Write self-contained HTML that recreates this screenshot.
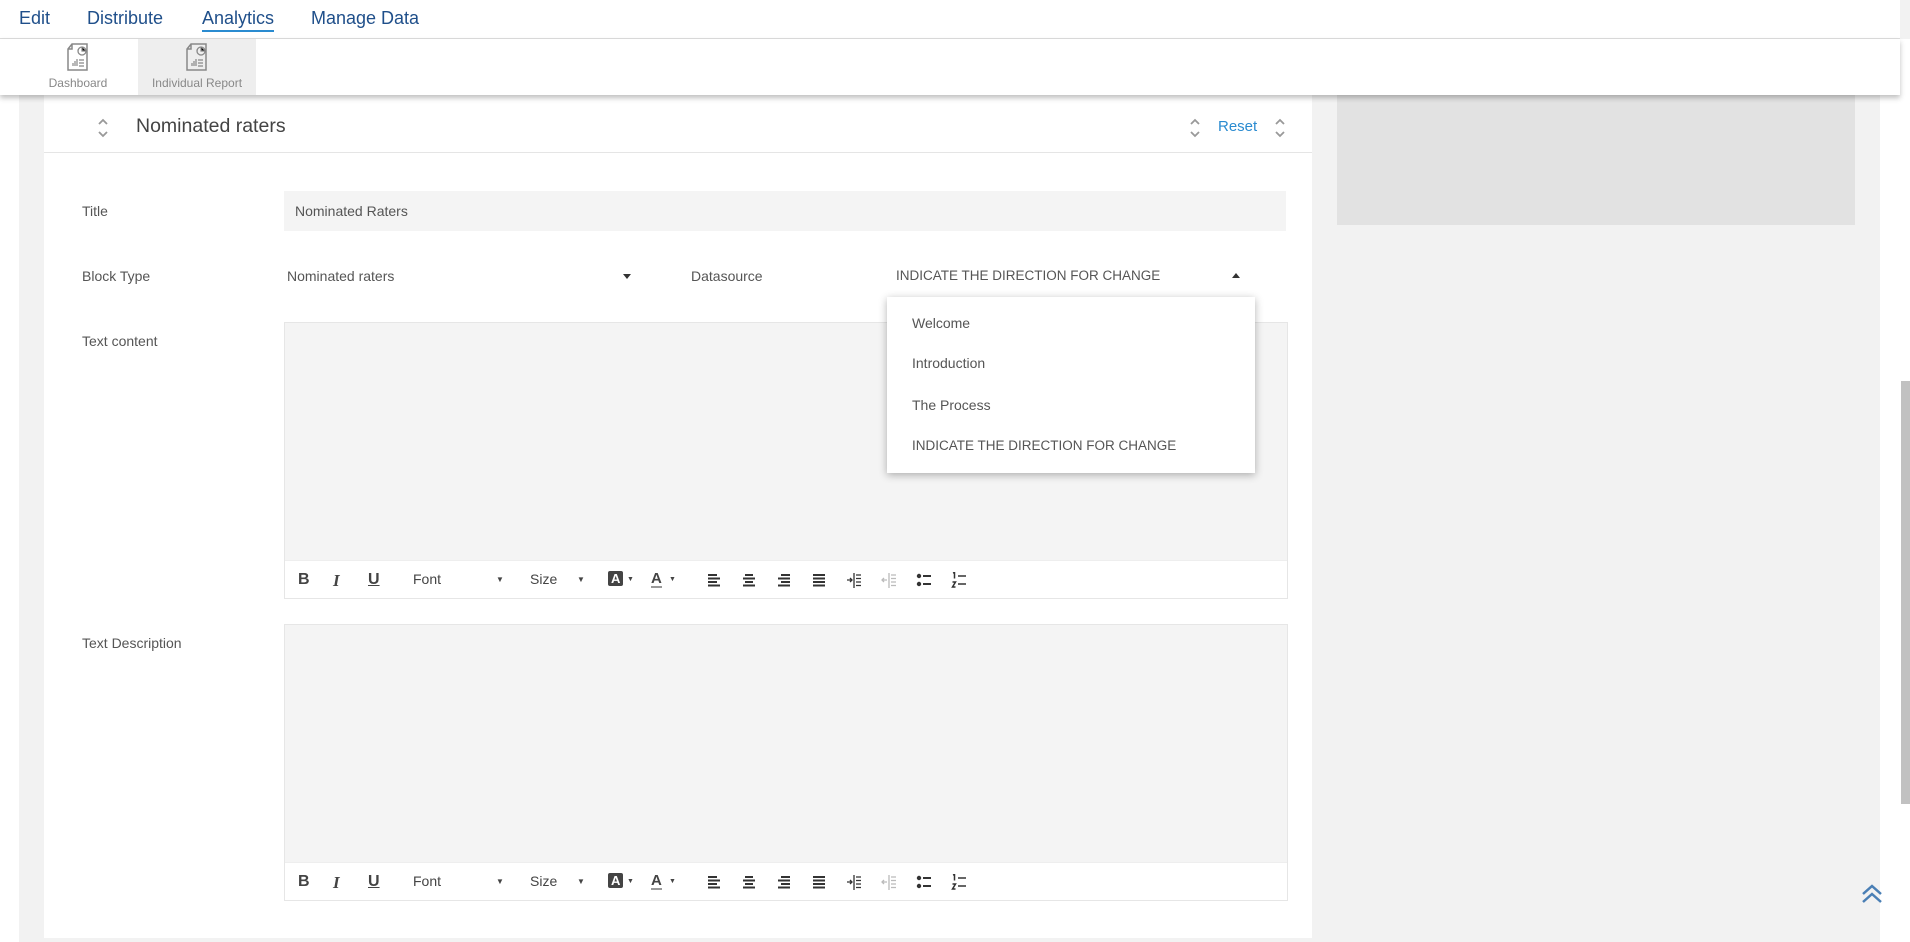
<!DOCTYPE html>
<html><head><meta charset="utf-8"><style>
*{box-sizing:border-box;margin:0;padding:0}
body{width:1910px;height:942px;overflow:hidden;background:#f2f2f2;font-family:"Liberation Sans",sans-serif;color:#555;position:relative}
.a{position:absolute}
.nav{left:0;top:0;width:1900px;height:39px;background:#fff;border-bottom:1px solid #ddd}
.nav span{position:absolute;top:8px;font-size:18px;color:#1f4f8a}
.bar{left:0;top:39px;width:1900px;height:56px;background:#fff;box-shadow:0 3px 5px rgba(0,0,0,.25);z-index:5}
.tab{position:absolute;top:0;height:56px;font-size:12px;color:#888;text-align:center}
.lbl{font-size:14px;color:#555}
.tb{position:absolute;top:0;height:38px;width:100%;background:#fff;border-top:1px solid #eee}
.tb span{position:absolute;top:10px;font-size:15px;color:#444}
.tb svg{position:absolute;top:11px}
.ed{background:#f4f4f4;border:1px solid #e6e6e6}
</style></head><body>
<div class="a nav"><span style="left:19px">Edit</span><span style="left:87px">Distribute</span><span style="left:202px;border-bottom:2px solid #2a8bd0;padding-bottom:1px">Analytics</span><span style="left:311px">Manage Data</span></div>
<div class="a bar">
 <div class="tab" style="left:37px;width:82px"><svg width="30" height="32" viewBox="0 0 30 32" style="margin-top:3px"><path d="M9 2h15v26H5V7z M9 2v5H5" fill="none" stroke="#888" stroke-width="1.5"/><circle cx="19" cy="9" r="4" fill="none" stroke="#888" stroke-width="1.3"/><path d="M19 5v4h4M10 24v-3M12 24v-5M14 24v-7M16 18h5M16 21h5M16 24h5" stroke="#888" stroke-width="1.2"/></svg><div style="margin-top:-1px">Dashboard</div></div>
 <div class="tab" style="left:138px;width:118px;background:#eee"><svg width="30" height="32" viewBox="0 0 30 32" style="margin-top:3px"><path d="M9 2h15v26H5V7z M9 2v5H5" fill="none" stroke="#888" stroke-width="1.5"/><circle cx="19" cy="9" r="4" fill="none" stroke="#888" stroke-width="1.3"/><path d="M19 5v4h4M10 24v-3M12 24v-5M14 24v-7M16 18h5M16 21h5M16 24h5" stroke="#888" stroke-width="1.2"/></svg><div style="margin-top:-1px">Individual Report</div></div>
</div>
<div class="a" style="left:0;top:95px;width:19px;height:847px;background:#fff"></div>
<div class="a" style="left:44px;top:95px;width:1268px;height:843px;background:#fff"></div>
<div class="a" style="left:1337px;top:95px;width:518px;height:130px;background:#e2e2e2"></div>
<div class="a" style="left:1880px;top:39px;width:30px;height:903px;background:#fff"></div>
<div class="a" style="left:1901px;top:381px;width:9px;height:423px;background:#c1c1c1"></div>
<svg class="a" style="left:97px;top:117px" width="12" height="22" viewBox="0 0 12 22"><path d="M2 7l4-4 4 4M2 15l4 4 4-4" fill="none" stroke="#999" stroke-width="1.8"/></svg>
<div class="a" style="left:136px;top:115px;font-size:19.5px;color:#444">Nominated raters</div>
<svg class="a" style="left:1189px;top:117px" width="12" height="22" viewBox="0 0 12 22"><path d="M2 7l4-4 4 4M2 15l4 4 4-4" fill="none" stroke="#999" stroke-width="1.8"/></svg>
<div class="a" style="left:1218px;top:118px;font-size:15px;color:#2a8bd0">Reset</div>
<svg class="a" style="left:1274px;top:117px" width="12" height="22" viewBox="0 0 12 22"><path d="M2 7l4-4 4 4M2 15l4 4 4-4" fill="none" stroke="#999" stroke-width="1.8"/></svg>
<div class="a" style="left:44px;top:152px;width:1268px;height:1px;background:#e5e5e5"></div>
<div class="a lbl" style="left:82px;top:203px">Title</div>
<div class="a" style="left:284px;top:191px;width:1002px;height:40px;background:#f4f4f4"></div>
<div class="a lbl" style="left:295px;top:203px">Nominated Raters</div>
<div class="a lbl" style="left:82px;top:268px">Block Type</div>
<div class="a lbl" style="left:287px;top:268px">Nominated raters</div>
<div class="a" style="left:623px;top:274px;border:4px solid transparent;border-top:5px solid #333"></div>
<div class="a lbl" style="left:691px;top:268px">Datasource</div>
<div class="a lbl" style="left:896px;top:268px;font-size:13.5px">INDICATE THE DIRECTION FOR CHANGE</div>
<div class="a" style="left:1232px;top:269px;border:4px solid transparent;border-bottom:5px solid #333"></div>
<div class="a lbl" style="left:82px;top:333px">Text content</div>
<div class="a ed" style="left:284px;top:322px;width:1004px;height:277px"><div class="tb" style="top:237px">
<span style="left:13px;font-weight:bold;font-size:16px">B</span><span style="left:48px;font-style:italic;font-weight:bold;font-family:'Liberation Serif',serif;font-size:17px">I</span><span style="left:83px;font-weight:bold;text-decoration:underline;font-size:16px">U</span><span style="left:128px;font-size:14px">Font</span><span style="left:211px;font-size:8px;top:14px">&#9660;</span><span style="left:245px;font-size:14px">Size</span><span style="left:292px;font-size:8px;top:14px">&#9660;</span><span style="left:323px;background:#444;color:#fff;font-size:13px;padding:0 3px;top:10px;font-weight:bold;border-radius:2px">A</span><span style="left:342px;font-size:7px;top:15px">&#9660;</span><span style="left:366px;font-weight:bold;font-size:15px;border-bottom:2px solid #999;line-height:15px">A</span><span style="left:384px;font-size:7px;top:15px">&#9660;</span>
<svg style="left:421px" width="16" height="16"><path d="M2 3h9M2 6.5h12M2 10h9M2 13.5h12" stroke="#333" stroke-width="2"/></svg>
<svg style="left:456px" width="16" height="16"><path d="M4 3h8M2 6.5h12M4 10h8M2 13.5h12" stroke="#333" stroke-width="2"/></svg>
<svg style="left:491px" width="16" height="16"><path d="M5 3h9M2 6.5h12M5 10h9M2 13.5h12" stroke="#333" stroke-width="2"/></svg>
<svg style="left:526px" width="16" height="16"><path d="M2 3h12M2 6.5h12M2 10h12M2 13.5h12" stroke="#333" stroke-width="2"/></svg>
<svg style="left:561px" width="16" height="16"><path d="M8 1v15M10 3h5M10 6.5h5M10 10h5M10 13.5h5M1 8h5M4 6l2 2-2 2" stroke="#333" stroke-width="1.3" fill="none"/></svg>
<svg style="left:596px" width="16" height="16"><path d="M8 1v15M10 3h5M10 6.5h5M10 10h5M10 13.5h5M1 8h5M3 6l-2 2 2 2" stroke="#bbb" stroke-width="1.3" fill="none"/></svg>
<svg style="left:631px" width="16" height="16"><circle cx="3" cy="4" r="2.2" fill="#333"/><circle cx="3" cy="12" r="2.2" fill="#333"/><path d="M7 4h8M7 12h8" stroke="#333" stroke-width="2"/></svg>
<svg style="left:666px" width="16" height="16"><path d="M2 1l1.5-0.5v6M1.5 10h3l-3 5h3M7 4h8M7 12h8" stroke="#333" stroke-width="1.5" fill="none"/></svg>
</div></div>
<div class="a lbl" style="left:82px;top:635px">Text Description</div>
<div class="a ed" style="left:284px;top:624px;width:1004px;height:277px"><div class="tb" style="top:237px">
<span style="left:13px;font-weight:bold;font-size:16px">B</span><span style="left:48px;font-style:italic;font-weight:bold;font-family:'Liberation Serif',serif;font-size:17px">I</span><span style="left:83px;font-weight:bold;text-decoration:underline;font-size:16px">U</span><span style="left:128px;font-size:14px">Font</span><span style="left:211px;font-size:8px;top:14px">&#9660;</span><span style="left:245px;font-size:14px">Size</span><span style="left:292px;font-size:8px;top:14px">&#9660;</span><span style="left:323px;background:#444;color:#fff;font-size:13px;padding:0 3px;top:10px;font-weight:bold;border-radius:2px">A</span><span style="left:342px;font-size:7px;top:15px">&#9660;</span><span style="left:366px;font-weight:bold;font-size:15px;border-bottom:2px solid #999;line-height:15px">A</span><span style="left:384px;font-size:7px;top:15px">&#9660;</span>
<svg style="left:421px" width="16" height="16"><path d="M2 3h9M2 6.5h12M2 10h9M2 13.5h12" stroke="#333" stroke-width="2"/></svg>
<svg style="left:456px" width="16" height="16"><path d="M4 3h8M2 6.5h12M4 10h8M2 13.5h12" stroke="#333" stroke-width="2"/></svg>
<svg style="left:491px" width="16" height="16"><path d="M5 3h9M2 6.5h12M5 10h9M2 13.5h12" stroke="#333" stroke-width="2"/></svg>
<svg style="left:526px" width="16" height="16"><path d="M2 3h12M2 6.5h12M2 10h12M2 13.5h12" stroke="#333" stroke-width="2"/></svg>
<svg style="left:561px" width="16" height="16"><path d="M8 1v15M10 3h5M10 6.5h5M10 10h5M10 13.5h5M1 8h5M4 6l2 2-2 2" stroke="#333" stroke-width="1.3" fill="none"/></svg>
<svg style="left:596px" width="16" height="16"><path d="M8 1v15M10 3h5M10 6.5h5M10 10h5M10 13.5h5M1 8h5M3 6l-2 2 2 2" stroke="#bbb" stroke-width="1.3" fill="none"/></svg>
<svg style="left:631px" width="16" height="16"><circle cx="3" cy="4" r="2.2" fill="#333"/><circle cx="3" cy="12" r="2.2" fill="#333"/><path d="M7 4h8M7 12h8" stroke="#333" stroke-width="2"/></svg>
<svg style="left:666px" width="16" height="16"><path d="M2 1l1.5-0.5v6M1.5 10h3l-3 5h3M7 4h8M7 12h8" stroke="#333" stroke-width="1.5" fill="none"/></svg>
</div></div>
<div class="a" style="left:887px;top:297px;width:368px;height:176px;background:#fff;box-shadow:0 2px 8px rgba(0,0,0,.3)">
 <div class="a lbl" style="left:25px;top:18px">Welcome</div>
 <div class="a lbl" style="left:25px;top:58px">Introduction</div>
 <div class="a lbl" style="left:25px;top:100px">The Process</div>
 <div class="a lbl" style="left:25px;top:141px;font-size:13.5px">INDICATE THE DIRECTION FOR CHANGE</div>
</div>
<svg class="a" style="left:1860px;top:882px" width="24" height="24" viewBox="0 0 24 24"><path d="M3 12l9-8 9 8M3 20l9-8 9 8" fill="none" stroke="#4a7fb5" stroke-width="2.5"/></svg>
</body></html>
